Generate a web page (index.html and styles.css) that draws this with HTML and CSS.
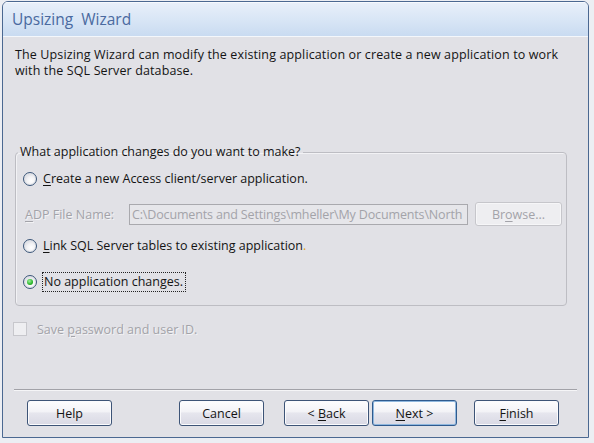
FILE: index.html
```html
<!DOCTYPE html>
<html>
<head>
<meta charset="utf-8">
<link rel="stylesheet" href="styles.css">
</head>
<body>
<div class="window">
  <div class="titlebar"><span class="title">Upsizing&nbsp; Wizard</span></div>
  <div class="content">
    <p class="intro">The Upsizing Wizard can modify the existing application or create a new application to work<br>with the SQL Server database.</p>
    <fieldset class="group">
      <legend class="legend">What application changes do you want to make?</legend>
      <div class="opt opt1"><span class="radio"></span><span class="lbl"><u>C</u>reate a new Access client/server application.</span></div>
      <div class="adp">
        <span class="adp-label"><u>A</u>DP File Name:</span>
        <span class="textbox">C:\Documents and Settings\mheller\My Documents\North</span>
        <span class="btn btn-disabled"><span>Br<u>o</u>wse...</span></span>
      </div>
      <div class="opt opt2"><span class="radio"></span><span class="lbl"><u>L</u>ink SQL Server tables to existing application<span class="dot">.</span></span></div>
      <div class="opt opt3"><span class="radio checked"></span><span class="lbl focus">No application changes.</span></div>
    </fieldset>
    <div class="check-row"><span class="checkbox"></span><span class="check-lbl">Save <u>p</u>assword and user ID.</span></div>
  </div>
  <div class="footer">
    <div class="sep"></div>
    <div class="buttons">
      <span class="btn b-help"><span>Help</span></span>
      <span class="btn b-cancel"><span>Cancel</span></span>
      <span class="btn b-back"><span>&lt; <u>B</u>ack</span></span>
      <span class="btn b-next default"><span><u>N</u>ext &gt;</span></span>
      <span class="btn b-finish"><span><u>F</u>inish</span></span>
    </div>
  </div>
</div>
</body>
</html>
```
FILE: styles.css
```css
html, body {
  margin: 0;
  padding: 0;
  background: #eceef3;
}
body {
  width: 594px;
  height: 443px;
  overflow: hidden;
  font-family: "Open Sans", "Noto Sans", sans-serif;
  font-size: 12.5px;
  color: #141414;
}
u { text-decoration: underline; text-underline-offset: 2px; }

.window {
  box-sizing: border-box;
  width: 587px;
  height: 437px;
  margin: 1px 0 0 2px;
  border: 1px solid #4b6891;
  border-radius: 6px 6px 0 0;
  background: #e1e1e6;
  display: flex;
  flex-direction: column;
  overflow: hidden;
}
.titlebar {
  height: 34px;
  flex: none;
  background: linear-gradient(#e9f0fa, #d6e4f5 60%, #c9dbf1);
  border-bottom: 1px solid #f4f7fb;
  display: flex;
  align-items: center;
  padding-left: 9px;
  box-shadow: inset 0 1px 0 #f7fafe;
}
.title {
  font-size: 15.5px;
  color: #4a6aa0;
}
.content {
  flex: 1;
  display: flex;
  flex-direction: column;
  padding-left: 12px;
}
.intro {
  margin: 10px 0 0 0;
  line-height: 16px;
  letter-spacing: 0.13px;
}
.group {
  margin: 65px 0 0 0;
  width: 552px;
  box-sizing: border-box;
  padding: 0 0 13px 0;
  border: 1px solid #bdbdc3;
  border-radius: 4px;
  box-shadow: inset 1px 1px 0 #f2f2f5;
}
.legend {
  margin-left: 2px;
  padding: 0 2px;
  line-height: 16px;
}
.opt {
  display: flex;
  align-items: center;
  height: 20px;
  margin-left: 7px;
}
.opt1 { margin-top: 9px; }
.opt2 { margin-top: 10px; }
.opt3 { margin-top: 16px; }
.radio {
  width: 12px;
  height: 12px;
  border: 1px solid #3c5779;
  border-radius: 50%;
  background: radial-gradient(circle at 60% 65%, #ffffff 0%, #f1f1f4 40%, #c4c7d0 100%);
  box-shadow: inset 0 0 0 1px #e3e5ea;
  flex: none;
  position: relative;
}
.radio.checked::after {
  content: "";
  position: absolute;
  left: 3px;
  top: 3px;
  width: 6px;
  height: 6px;
  border-radius: 50%;
  background: radial-gradient(circle at 40% 35%, #9cf09c 0%, #2bb52b 60%, #128a12 100%);
}
.lbl {
  margin-left: 6px;
  line-height: 16px;
}
.lbl.focus {
  margin-left: 5px;
  padding: 1px 2px 1px 1px;
  border: 1px dotted #222;
}
.dot { color: #e3a21a; }

.adp {
  display: flex;
  align-items: center;
  height: 24px;
  margin: 13px 0 0 9px;
}
.adp-label {
  width: 104px;
  color: #a3a3a9;
  text-shadow: 1px 1px 0 #f3f3f5;
  flex: none;
}
.textbox {
  box-sizing: border-box;
  width: 339px;
  height: 21px;
  border: 1px solid #a9a9ae;
  background: #e6e6ea;
  color: #a3a3a9;
  padding: 0 0 0 2px;
  line-height: 19px;
  white-space: nowrap;
  overflow: hidden;
  flex: none;
  letter-spacing: -0.15px;
}
.btn {
  box-sizing: border-box;
  display: flex;
  align-items: center;
  justify-content: center;
  width: 85px;
  height: 26px;
  border: 1px solid #3d5477;
  border-radius: 3px;
  background: linear-gradient(#fdfdfe 0%, #f3f3f7 45%, #e6e6ee 50%, #d9d9e4 100%);
  box-shadow: inset 0 0 0 1px #fbfbfd;
  color: #141414;
  flex: none;
  white-space: pre;
}
.btn-disabled {
  width: 87px;
  height: 24px;
  margin-left: 7px;
  border-color: #c6c6cb;
  background: #eeeef1;
  box-shadow: inset 0 0 0 1px #f6f6f8;
  color: #a3a3a9;
}
.check-row {
  display: flex;
  align-items: center;
  height: 16px;
  margin: 15px 0 0 -2px;
}
.checkbox {
  box-sizing: border-box;
  width: 14px;
  height: 14px;
  border: 1px solid #c7c7cc;
  background: #eeeef1;
  flex: none;
}
.check-lbl {
  margin-left: 10px;
  color: #a3a3a9;
  text-shadow: 1px 1px 0 #f3f3f5;
}
.footer {
  flex: none;
  padding-bottom: 11px;
}
.sep {
  margin: 0 11px;
  border-top: 1px solid #a2a2a8;
  border-bottom: 1px solid #f5f5f7;
}
.buttons {
  display: flex;
  margin-top: 9px;
  padding-left: 24px;
}
.b-cancel { margin-left: 67px; }
.b-back { margin-left: 20px; }
.b-next { margin-left: 3px; }
.b-finish { margin-left: 17px; }
.btn.default {
  border-color: #2f5a8e;
  box-shadow: inset 0 0 0 1px #8fb7de;
}
```
